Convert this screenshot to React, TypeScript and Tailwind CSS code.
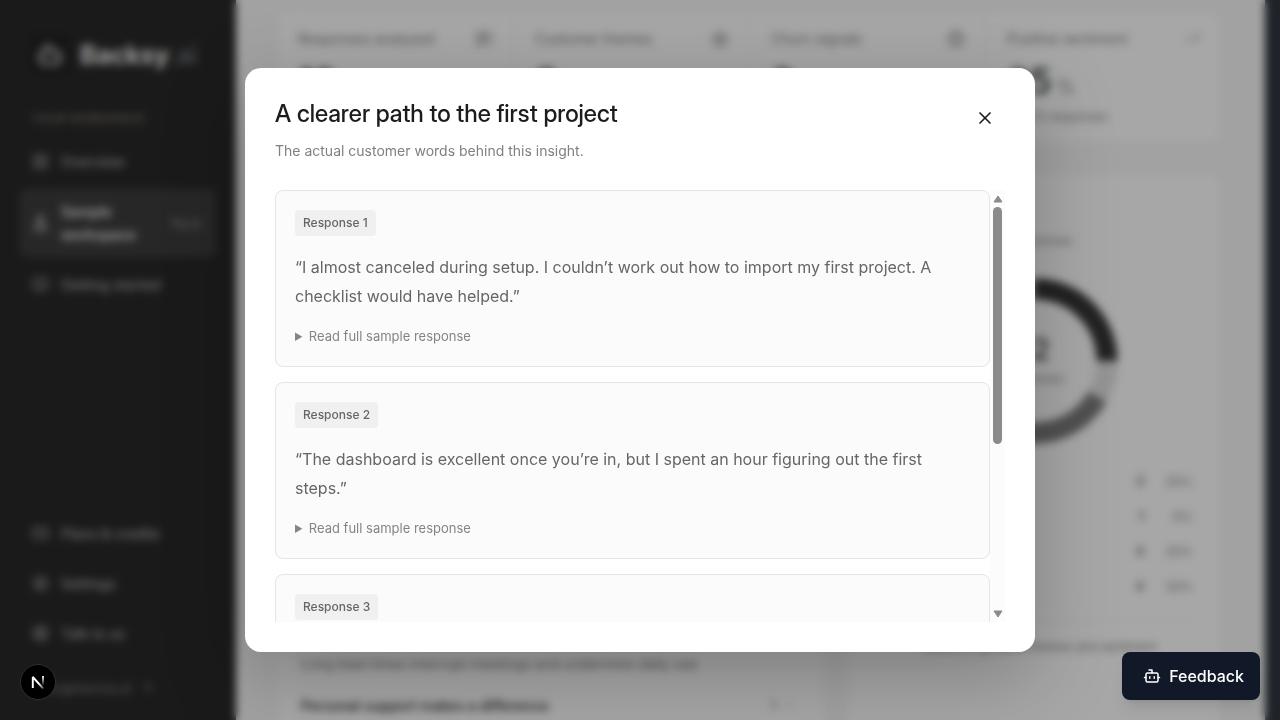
import { useLayoutEffect, useRef, useState } from "react";
import type { ReactNode } from "react";
import {
  ArrowUpRight,
  BookOpen,
  Bot,
  ChevronRight,
  CircleAlert,
  CreditCard,
  FlaskConical,
  LayoutGrid,
  Layers,
  LifeBuoy,
  MessageSquareText,
  Settings,
  TrendingUp,
  X,
} from "lucide-react";

const responses = [
  "“I almost canceled during setup. I couldn’t work out how to import my first project. A checklist would have helped.”",
  "“The dashboard is excellent once you’re in, but I spent an hour figuring out the first steps.”",
  "“Setup took longer than expected. Once a teammate showed me where to begin, the rest of the product made sense right away.”",
  "“A short guide for the first project would be welcome.”",
];

const stats = [
  { label: "Responses analyzed", value: "12", unit: "", note: "", icon: <MessageSquareText size={16} /> },
  { label: "Customer themes", value: "8", unit: "", note: "", icon: <Layers size={16} /> },
  { label: "Churn signals", value: "3", unit: "", note: "", icon: <CircleAlert size={16} strokeWidth={3} /> },
  { label: "Positive sentiment", value: "25", unit: "%", note: "3 of 12 responses", icon: <TrendingUp size={16} strokeWidth={1.5} /> },
];

const sentiment = [
  { count: 3, share: "25%" },
  { count: 1, share: "8%" },
  { count: 4, share: "33%" },
  { count: 4, share: "33%" },
];

function NavItem({ icon, active, badge, children }: { icon: ReactNode; active?: boolean; badge?: string; children: ReactNode }) {
  return (
    <a
      href="#"
      className={
        active
          ? "flex items-center gap-3 rounded-lg bg-[#343434] px-3 py-[11px] text-[14px] leading-[23px] font-semibold text-[#e4e4e4]"
          : "flex items-center gap-3 rounded-lg px-3 py-[11px] text-[14px] leading-[23px] font-medium text-[#a3a3a3]"
      }
    >
      <span className="shrink-0">{icon}</span>
      <span className="flex-1">{children}</span>
      {badge && <span className="px-1 text-[12px] font-medium text-[#999999]">{badge}</span>}
    </a>
  );
}

function Sidebar() {
  return (
    <aside className="flex w-[236px] shrink-0 flex-col bg-[#1f1f1f] px-5 pb-5">
      <div className="flex items-center gap-[10px] px-[10px] pt-[35px]">
        <span className="flex size-10 items-center justify-center rounded-lg bg-[#171717] text-[#b5b5b5]">
          <Bot size={28} strokeWidth={2.5} />
        </span>
        <span className="text-[25px] leading-10 font-bold text-[#efefef]">
          Backsy<span className="font-medium text-[#68757a]">.ai</span>
        </span>
      </div>
      <p className="px-3 pt-9 text-[12px] leading-4 font-medium text-[#756f69]">YOUR WORKSPACE</p>
      <nav className="flex flex-1 flex-col gap-[5px] pt-3">
        <NavItem icon={<LayoutGrid size={17} />}>Overview</NavItem>
        <NavItem icon={<FlaskConical size={17} />} active badge="Try it">
          Sample workspace
        </NavItem>
        <NavItem icon={<BookOpen size={17} />}>Getting started</NavItem>
      </nav>
      <nav className="flex flex-col gap-[5px]">
        <NavItem icon={<CreditCard size={17} />}>Plans &amp; credits</NavItem>
        <NavItem icon={<Settings size={17} />}>Settings</NavItem>
        <NavItem icon={<LifeBuoy size={17} />}>Talk to us</NavItem>
      </nav>
      <a href="#" className="mt-5 flex items-center gap-2 px-3 text-[13px] leading-6 text-[#7c7c7c]">
        hello@backsy.ai <ArrowUpRight size={14} />
      </a>
    </aside>
  );
}

function Donut() {
  return (
    <div className="relative">
      <svg width="166" height="166" viewBox="0 0 166 166" fill="none" strokeWidth="21" className="-rotate-90">
        <circle cx="83" cy="83" r="72" stroke="#2c2c2c" pathLength="12" strokeDasharray="3 9" />
        <circle cx="83" cy="83" r="72" stroke="#dedede" pathLength="12" strokeDasharray="1 11" strokeDashoffset="-3" />
        <circle cx="83" cy="83" r="72" stroke="#757575" pathLength="12" strokeDasharray="4 8" strokeDashoffset="-4" />
        <circle cx="83" cy="83" r="72" stroke="#a5a5a5" pathLength="12" strokeDasharray="4 8" strokeDashoffset="-8" />
      </svg>
      <div className="absolute inset-0 flex flex-col items-center justify-center gap-1">
        <span className="text-[30px] leading-8 font-medium text-[#3b3a34]">12</span>
        <span className="text-[12px] leading-5 text-[#888888]">responses</span>
      </div>
    </div>
  );
}

function Dashboard() {
  return (
    <main className="min-w-0 flex-1 overflow-hidden bg-[#f5f5f5] pt-[10px] pr-[43px] pl-10">
      <section className="grid grid-cols-4 rounded-xl border border-[#f1f1f1] bg-[#fdfdfd]">
        {stats.map((stat) => (
          <div key={stat.label} className="h-[132px] border-l border-[#f3f3f3] px-[21px] pt-[18px] first:border-l-0">
            <div className="flex items-center justify-between text-[14px] leading-5 text-[#7b7b7b]">
              {stat.label}
              {stat.icon}
            </div>
            <p className="mt-3 text-[36px] leading-10 font-medium text-[#282828]">
              {stat.value}
              <span className="pl-1 text-[20px] text-[#999999]">{stat.unit}</span>
            </p>
            <p className="text-[12px] leading-5 text-[#7b7b7b]">{stat.note}</p>
          </div>
        ))}
      </section>
      <div className="mt-7 grid grid-cols-[minmax(0,1fr)_375px] gap-[22px]">
        <section className="flex h-[600px] flex-col rounded-xl border border-[#f1f1f1] bg-[#fdfdfd] px-6 pt-[481px] text-[14px] leading-5">
          <p className="text-[#777777]">Long lead times interrupt meetings and undermine daily use</p>
          <div className="mt-[22px] flex items-center justify-between font-semibold text-[#3d3d3d]">
            Personal support makes a difference
            <span className="flex items-center gap-2 pr-1 text-[12px] text-[#888888]">
              1 <ChevronRight size={12} />
            </span>
          </div>
        </section>
        <section className="h-[600px] rounded-xl border border-[#f1f1f1] bg-[#fdfdfd] px-[29px] pt-[58px] text-[12px]">
          <p className="text-center leading-5 text-[#888888]">All responses</p>
          <div className="mt-[27px] flex justify-center">
            <Donut />
          </div>
          <ul className="mt-5 border-b border-[#f0f0f0] pb-4">
            {sentiment.map((row, index) => (
              <li key={index} className="flex h-[35px] items-center justify-end text-[13px] font-medium text-[#555555]">
                {row.count}
                <span className="w-12 text-right text-[12px] font-normal text-[#777777]">{row.share}</span>
              </li>
            ))}
          </ul>
          <p className="pt-4 pr-9 text-right leading-5 text-[#777777]">Based on grouped themes and sentiment</p>
        </section>
      </div>
    </main>
  );
}

function ResponseCard({ index, quote }: { index: number; quote: string }) {
  return (
    <article className="shrink-0 rounded-lg border border-[#e5e5e5] bg-[#fbfbfb] p-[19px]">
      <span className="flex h-[26px] w-fit items-center rounded-[4px] bg-[#f0f0f0] px-2 text-[12px] font-medium text-[#666666]">
        Response {index}
      </span>
      <blockquote className="mt-[17px] text-[16px] leading-[29px] text-[#666666]">{quote}</blockquote>
      <details className="mt-[15px] pb-px text-[13px] leading-5 text-[#858585]">
        <summary className="cursor-pointer">Read full sample response</summary>
        <p className="pt-2">{quote}</p>
      </details>
    </article>
  );
}

function ResponseList() {
  const list = useRef<HTMLDivElement>(null);
  const [thumb, setThumb] = useState({ top: 0, size: 100 });

  const measure = () => {
    const el = list.current;
    if (!el) return;
    setThumb({
      top: (el.scrollTop / el.scrollHeight) * 100,
      size: (el.clientHeight / el.scrollHeight) * 100,
    });
  };

  useLayoutEffect(() => {
    measure();
    window.addEventListener("resize", measure);
    return () => window.removeEventListener("resize", measure);
  }, []);

  const scrollBy = (distance: number) => list.current?.scrollBy({ top: distance });

  return (
    <div className="mt-7 flex max-h-[60vh]">
      <div
        ref={list}
        onScroll={measure}
        className="flex min-w-0 flex-1 flex-col gap-[15px] overflow-y-auto [scrollbar-width:none]"
      >
        {responses.map((quote, index) => (
          <ResponseCard key={quote} index={index + 1} quote={quote} />
        ))}
      </div>
      <div className="flex w-[15px] shrink-0 flex-col items-center bg-[#fcfcfc] text-[#8b8b8b]">
        <button type="button" aria-label="Scroll up" onClick={() => scrollBy(-40)} className="flex h-[17px] w-full items-center justify-center">
          <svg width="10" height="8" viewBox="0 0 10 8" fill="currentColor" stroke="currentColor" strokeLinejoin="round">
            <path d="M5 1L9 7H1Z" />
          </svg>
        </button>
        <div className="w-[9px] flex-1">
          <div style={{ height: `${thumb.top}%` }} />
          <div className="rounded-full bg-[#8b8b8b]" style={{ height: `${thumb.size}%` }} />
        </div>
        <button type="button" aria-label="Scroll down" onClick={() => scrollBy(40)} className="flex h-[17px] w-full items-center justify-center">
          <svg width="10" height="8" viewBox="0 0 10 8" fill="currentColor" stroke="currentColor" strokeLinejoin="round">
            <path d="M5 7L9 1H1Z" />
          </svg>
        </button>
      </div>
    </div>
  );
}

export default function App() {
  return (
    <div className="relative flex h-screen overflow-hidden bg-[#252d37] font-['Inter',sans-serif]">
      <Sidebar />
      <Dashboard />
      <div className="w-[15px] shrink-0" />

      <div className="fixed inset-0 flex items-center justify-center bg-[#141414]/37 p-5 backdrop-blur-[4px]">
        <section
          role="dialog"
          aria-modal="true"
          aria-labelledby="dialog-title"
          className="w-full max-w-[790px] rounded-2xl bg-white p-[30px] shadow-[0_24px_80px_rgba(0,0,0,0.25)]"
        >
          <header className="flex items-start justify-between">
            <div>
              <h2 id="dialog-title" className="font-['Inter_Display','Inter',sans-serif] text-[24px] leading-8 font-medium text-[#1c1c1c]">
                A clearer path to the first project
              </h2>
              <p className="mt-[10px] text-[14px] leading-[22px] text-[#808080]">The actual customer words behind this insight.</p>
            </div>
            <button type="button" aria-label="Close" className="flex size-10 items-center justify-center text-[#1c1c1c]">
              <X size={20} />
            </button>
          </header>
          <ResponseList />
        </section>
      </div>

      <button
        type="button"
        className="fixed right-5 bottom-5 flex h-12 items-center gap-2 rounded-lg bg-[#111827] pr-4 pl-[21px] text-[16px] font-medium text-white shadow-lg"
      >
        <Bot size={18} />
        Feedback
      </button>

      <button
        type="button"
        aria-label="Open developer tools"
        className="fixed bottom-5 left-5 flex size-9 items-center justify-center rounded-full border border-[#303030] bg-black"
      >
        <svg width="14" height="14" viewBox="0 0 14 14" fill="none" strokeWidth="1.9">
          <defs>
            <linearGradient id="diagonal" x1="8" y1="8" x2="13" y2="14" gradientUnits="userSpaceOnUse">
              <stop stopColor="#ffffff" />
              <stop offset="0.7" stopColor="#ffffff" stopOpacity="0.5" />
              <stop offset="1" stopColor="#ffffff" stopOpacity="0" />
            </linearGradient>
            <linearGradient id="stem" x1="12" y1="1" x2="12" y2="11" gradientUnits="userSpaceOnUse">
              <stop stopColor="#ffffff" />
              <stop offset="1" stopColor="#ffffff" stopOpacity="0" />
            </linearGradient>
          </defs>
          <path d="M1.8 13V2L12.6 14" stroke="url(#diagonal)" strokeLinejoin="bevel" />
          <path d="M12 1V10" stroke="url(#stem)" />
        </svg>
      </button>
    </div>
  );
}
